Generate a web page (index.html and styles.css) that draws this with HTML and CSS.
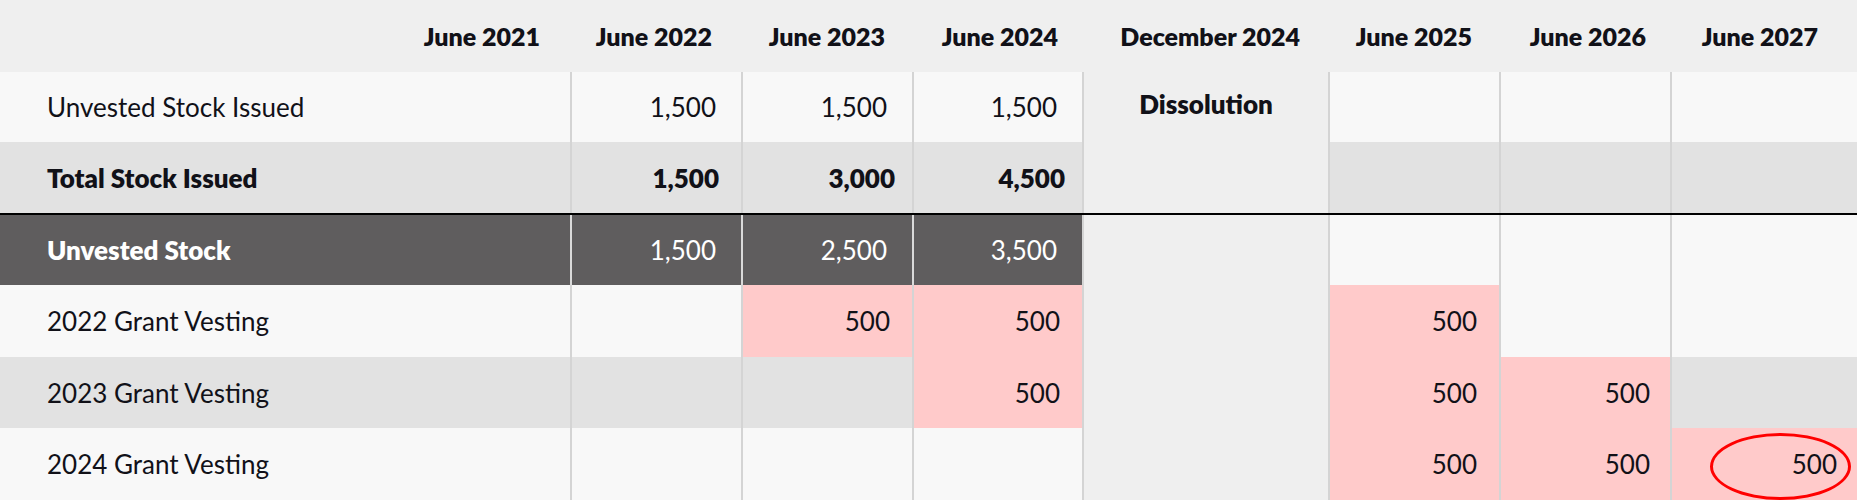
FILE: index.html
```html
<!DOCTYPE html>
<html lang="en">
<head>
<meta charset="utf-8">
<title>Stock vesting</title>
<link rel="stylesheet" href="styles.css">
</head>
<body>
<div class="sheet">
  <div class="hd first">June 2021</div>
  <div class="hd h2022">June 2022</div>
  <div class="hd">June 2023</div>
  <div class="hd h2024">June 2024</div>
  <div class="hd dec">December 2024</div>
  <div class="hd">June 2025</div>
  <div class="hd h2026">June 2026</div>
  <div class="hd last">June 2027</div>

  <div class="diss"><span>Dissolution</span></div>

  <!-- row 1 -->
  <div class="c lbl light r1">Unvested Stock Issued</div>
  <div class="c num light r1 wide">1,500</div>
  <div class="c num light r1 wide">1,500</div>
  <div class="c num light r1 wide">1,500</div>
  <div class="c num light r1 after"></div>
  <div class="c num light r1"></div>
  <div class="c num light r1"></div>

  <!-- row 2 -->
  <div class="c lbl gray r2 bold">Total Stock Issued</div>
  <div class="c num gray r2 bold">1,500</div>
  <div class="c num gray r2 bold tight">3,000</div>
  <div class="c num gray r2 bold tight">4,500</div>
  <div class="c num gray r2 after"></div>
  <div class="c num gray r2"></div>
  <div class="c num gray r2"></div>

  <div class="rule"></div>

  <!-- row 3 -->
  <div class="c lbl dark r3 bold">Unvested Stock</div>
  <div class="c num dark r3 wide">1,500</div>
  <div class="c num dark r3 wide">2,500</div>
  <div class="c num dark r3 wide">3,500</div>
  <div class="c num light r3 after"></div>
  <div class="c num light r3"></div>
  <div class="c num light r3"></div>

  <!-- row 4 -->
  <div class="c lbl light r4">2022 Grant Vesting</div>
  <div class="c num light r4"></div>
  <div class="c num pink r4">500</div>
  <div class="c num pink r4">500</div>
  <div class="c num pink r4 after">500</div>
  <div class="c num light r4"></div>
  <div class="c num light r4"></div>

  <!-- row 5 -->
  <div class="c lbl gray r5">2023 Grant Vesting</div>
  <div class="c num gray r5"></div>
  <div class="c num gray r5"></div>
  <div class="c num pink r5">500</div>
  <div class="c num pink r5 after">500</div>
  <div class="c num pink r5 snug">500</div>
  <div class="c num gray r5"></div>

  <!-- row 6 -->
  <div class="c lbl light r6">2024 Grant Vesting</div>
  <div class="c num light r6"></div>
  <div class="c num light r6"></div>
  <div class="c num light r6"></div>
  <div class="c num pink r6 after">500</div>
  <div class="c num pink r6 snug">500</div>
  <div class="c num pink r6 circled snug">500<span class="ring"></span></div>
</div>
</body>
</html>
```

FILE: styles.css
```css
html, body {
  margin: 0;
  padding: 0;
  background: #f8f8f8;
}

.sheet {
  display: grid;
  grid-template-columns: 570px 171px 171px 170px 246px 171px 171px 187px;
  grid-template-rows: 72px 70px 71px 2px 70px 72px 71px 72px;
  width: 1857px;
  height: 500px;
  overflow: hidden;
  font-family: "Lato", "Liberation Sans", sans-serif;
  font-size: 26px;
  color: #111118;
  background: #f8f8f8;
}

.hd {
  grid-row: 1;
  background: #efefef;
  display: flex;
  align-items: center;
  justify-content: flex-end;
  padding-right: 27px;
  font-size: 25px;
  font-weight: 800;
}
.hd.first { padding-right: 30px; }
.hd.h2022 { padding-right: 29px; }
.hd.h2024 { padding-right: 24px; }
.hd.dec { padding-right: 28px; }
.hd.h2026 { padding-right: 24px; }
.hd.last { padding-right: 39px; }

.diss {
  grid-column: 5;
  grid-row: 2 / 9;
  background: #efefef;
  border-left: 2px solid #d4d4d4;
  display: flex;
  justify-content: center;
  align-items: flex-start;
  padding-top: 16px;
  font-weight: 800;
}

.rule {
  grid-column: 1 / -1;
  grid-row: 4;
  background: #000;
}

.c {
  display: flex;
  align-items: center;
  box-sizing: border-box;
}
.lbl {
  grid-column: 1;
  padding-left: 47px;
}
.num {
  justify-content: flex-end;
  padding-right: 22px;
  border-left: 2px solid #d4d4d4;
}
.num.wide { padding-right: 25px; }
.num.tight { padding-right: 17px; }
.num.snug { padding-right: 20px; }
.after { grid-column: 6; }

.r1 { grid-row: 2; }
.r2 { grid-row: 3; }
.r3 { grid-row: 5; }
.r4 { grid-row: 6; }
.r5 { grid-row: 7; }
.r6 { grid-row: 8; }

.light { background: #f8f8f8; }
.gray { background: #e2e2e2; }
.dark { background: #5f5d5e; color: #ffffff; }
.dark.num { border-left-color: #dadada; }
.pink { background: #ffcaca; }
.bold { font-weight: 800; }

.circled { position: relative; }
.ring {
  position: absolute;
  left: 38px;
  top: 5px;
  width: 141px;
  height: 67px;
  box-sizing: border-box;
  border: 3.5px solid #ff0000;
  border-radius: 50%;
}
```
